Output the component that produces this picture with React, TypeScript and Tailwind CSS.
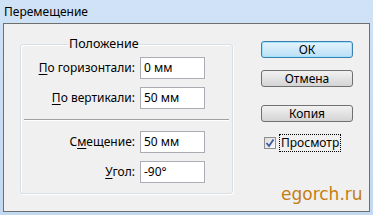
const FONT = "font-['Noto_Sans','Open_Sans',sans-serif]";

function Field({ label, u, rest, value }: { label: string; u: string; rest: string; value: string }) {
  return (
    <div className="flex items-center">
      <div className="w-[119px] shrink-0 pr-[5px] text-right leading-none">
        {label}
        <span className="underline underline-offset-2">{u}</span>
        {rest}
      </div>
      <div className="flex h-[22px] w-[65px] items-center border border-[#abadb3] bg-white pl-[3px] leading-none">
        {value}
      </div>
    </div>
  );
}

function Btn({ children, main }: { children: React.ReactNode; main?: boolean }) {
  return (
    <div
      className={
        "flex h-[17px] w-[92px] items-center justify-center rounded-[3px] border leading-none " +
        (main
          ? "border-[#3c7fb1] bg-gradient-to-b from-[#e5f4fc] to-[#b9e0f6] shadow-[inset_0_0_0_1px_#9fe3fb]"
          : "border-[#707070] bg-gradient-to-b from-[#f2f2f2] to-[#d4d4d4]")
      }
    >
      {children}
    </div>
  );
}

export default function App() {
  return (
    <div className={`h-[215px] w-[373px] bg-gradient-to-b from-[#cfe2f6] to-[#c3d9f1] text-[12px] text-black ${FONT}`}>
      <div className="flex h-[23px] items-center pl-[4px] pt-[1px]">Перемещение</div>
      <div className="mx-[3px] h-[189px] w-[367px] border border-[#6f6f6f] bg-[#f0f0f0]">
        <div className="flex">
          <div className="relative ml-[16px] mt-[20px] h-[150px] w-[213px] rounded-[3px] border border-[#d5dfe5] shadow-[inset_1px_1px_0_#fff,1px_1px_0_#fff]">
            <div className="absolute left-[47px] top-[-9px] bg-[#f0f0f0] px-[1px] text-[12.5px] leading-[16px]">
              Положение
            </div>
            <div className="mt-[12px] flex flex-col gap-[8px]">
              <Field label="" u="П" rest="о горизонтали:" value="0 мм" />
              <Field label="" u="П" rest="о вертикали:" value="50 мм" />
            </div>
            <div className="mx-[3px] my-[10px] h-[2px] border-t border-[#a0a0a0] border-b border-b-white" />
            <div className="flex flex-col gap-[8px]">
              <Field label="С" u="м" rest="ещение:" value="50 мм" />
              <Field label="" u="У" rest="гол:" value="-90°" />
            </div>
          </div>
          <div className="ml-[28px] mt-[17px] flex flex-col">
            <Btn main>ОК</Btn>
            <div className="mt-[12px]">
              <Btn>Отмена</Btn>
            </div>
            <div className="mt-[18px]">
              <Btn>Копия</Btn>
            </div>
            <div className="mt-[12px] flex items-center">
              <div className="ml-[3px] flex h-[12px] w-[12px] items-center justify-center border border-[#8f8f8f] bg-gradient-to-br from-[#dcdcdc] to-[#fafafa]">
                <svg width="10" height="10" viewBox="0 0 10 10">
                  <path d="M1.5 5 L4 8 L8.5 1.5" fill="none" stroke="#3d5a9e" strokeWidth="1.8" />
                </svg>
              </div>
              <div className="ml-[3px] border border-dotted border-black px-[1px] py-[1px] leading-[14px]">Просмотр</div>
            </div>
            <div className="ml-[20px] mt-[34px] font-['DejaVu_Sans',sans-serif] text-[17px] leading-none text-[#c47e12]">
              egorch.ru
            </div>
          </div>
        </div>
      </div>
    </div>
  );
}
